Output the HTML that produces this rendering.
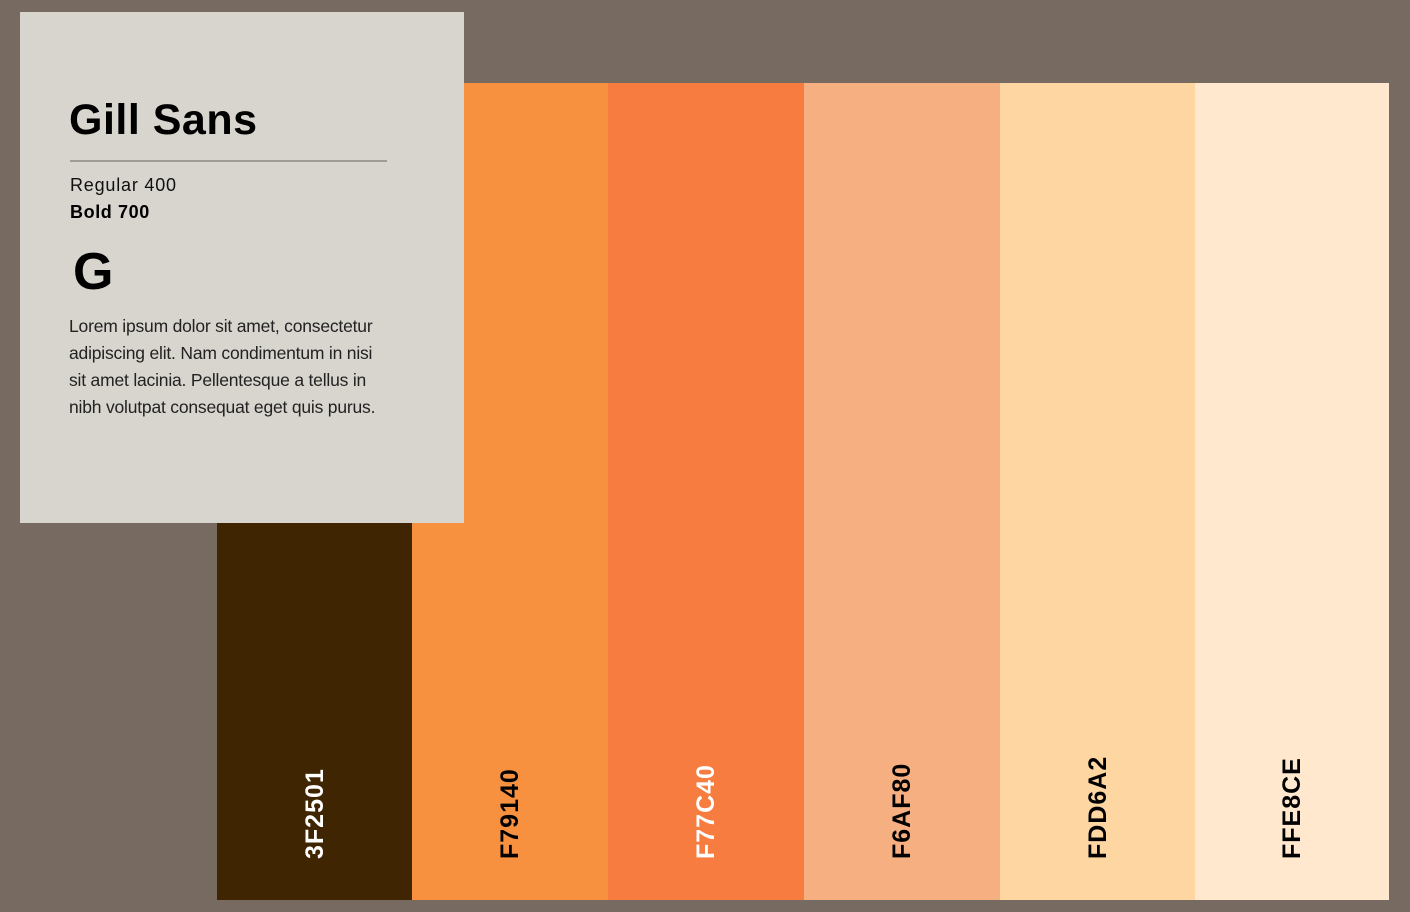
<!DOCTYPE html>
<html><head><meta charset="utf-8"><style>
*{margin:0;padding:0;box-sizing:border-box}
body{width:1410px;height:912px;background:#776b61;position:relative;overflow:hidden;font-family:"Liberation Sans",sans-serif}
.col{position:absolute;top:83px;height:817px}
.lab{position:absolute;bottom:12px;left:50%;transform-origin:0 0;transform:rotate(-90deg);font-weight:bold;font-size:25px;white-space:nowrap;letter-spacing:1px}
.card{position:absolute;left:20px;top:12px;width:444px;height:511px;background:#d8d5ce}
</style></head><body>
<div class="col" style="left:217px;width:195px;background:#3f2501"><div class="lab" style="color:#fff;margin-left:-14px">3F2501</div></div>
<div class="col" style="left:412px;width:196px;background:#f79140"><div class="lab" style="color:#000;margin-left:-14px">F79140</div></div>
<div class="col" style="left:608px;width:196px;background:#f77c40"><div class="lab" style="color:#fff;margin-left:-14px">F77C40</div></div>
<div class="col" style="left:804px;width:196px;background:#f6af80"><div class="lab" style="color:#000;margin-left:-14px">F6AF80</div></div>
<div class="col" style="left:1000px;width:195px;background:#fdd6a2"><div class="lab" style="color:#000;margin-left:-14px">FDD6A2</div></div>
<div class="col" style="left:1195px;width:194px;background:#ffe8ce"><div class="lab" style="color:#000;margin-left:-14px">FFE8CE</div></div>
<div class="card">
<div style="position:absolute;left:49px;top:84px;font-size:43px;font-weight:bold;color:#000;letter-spacing:0.5px">Gill Sans</div>
<div style="position:absolute;left:50px;top:148px;width:317px;height:2px;background:#a19b95"></div>
<div style="position:absolute;left:50px;top:163px;font-size:18px;color:#111;letter-spacing:0.8px">Regular 400</div>
<div style="position:absolute;left:50px;top:190px;font-size:18px;font-weight:bold;color:#000;letter-spacing:0.6px">Bold 700</div>
<div style="position:absolute;left:53px;top:230px;font-size:52px;font-weight:bold;color:#000">G</div>
<div style="position:absolute;left:49px;top:301px;width:322px;font-size:17.5px;line-height:27px;color:#222;letter-spacing:-0.2px">Lorem ipsum dolor sit amet, consectetur adipiscing elit. Nam condimentum in nisi sit amet lacinia. Pellentesque a tellus in nibh volutpat consequat eget quis purus.</div>
</div>
</body></html>
